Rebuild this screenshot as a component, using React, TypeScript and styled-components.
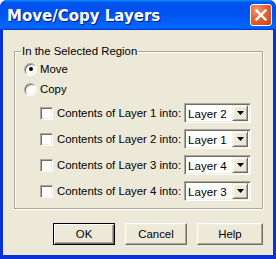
import styled, { createGlobalStyle } from 'styled-components';

const Global = createGlobalStyle`
  html, body { margin: 0; padding: 0; background: #fff; }
  * { box-sizing: border-box; }
`;

const rows = [
  { n: 1, into: 'Layer 2' },
  { n: 2, into: 'Layer 1' },
  { n: 3, into: 'Layer 4' },
  { n: 4, into: 'Layer 3' },
];

const App = () => {
  return (
    <>
      <Global />
      <Window>
        <TitleBar>
          <Title>Move/Copy Layers</Title>
          <CloseButton>
            <svg width="12" height="12" viewBox="0 0 12 12">
              <path d="M1.5 1.5 L10.5 10.5 M10.5 1.5 L1.5 10.5" stroke="#fff" strokeWidth="2.4" strokeLinecap="square" />
            </svg>
          </CloseButton>
        </TitleBar>

        <Client>
          <Group>
            <Legend>In the Selected Region</Legend>
            <OptionRow>
              <Radio checked />
              <span>Move</span>
            </OptionRow>
            <OptionRow $gap={4}>
              <Radio />
              <span>Copy</span>
            </OptionRow>
            {rows.map((r) => (
              <LayerRow key={r.n}>
                <CheckBox />
                <LayerLabel>Contents of Layer {r.n} into:</LayerLabel>
                <Combo>
                  <ComboText>{r.into}</ComboText>
                  <ComboButton>
                    <svg width="7" height="4" viewBox="0 0 7 4">
                      <path d="M0 0 H7 L3.5 4 Z" fill="#000" />
                    </svg>
                  </ComboButton>
                </Combo>
              </LayerRow>
            ))}
          </Group>

          <ButtonRow>
            <PushButton $default>OK</PushButton>
            <PushButton>Cancel</PushButton>
            <PushButton $wide>Help</PushButton>
          </ButtonRow>
        </Client>
      </Window>
    </>
  );
};

const Window = styled.div`
  width: 276px;
  height: 259px;
  display: flex;
  flex-direction: column;
  background: #0831d9;
  border-radius: 7px 7px 0 0;
  overflow: hidden;
  font-family: 'Liberation Sans', Arial, sans-serif;
  font-size: 11.4px;
  color: #000;
`;

const TitleBar = styled.div`
  height: 30px;
  flex: none;
  display: flex;
  align-items: center;
  padding: 0 4px 0 7px;
  background: linear-gradient(180deg, #0997ff, #0053ee 8%, #0050ee 40%, #0066ff 88%, #0066ff 93%, #005bff 95%, #003dd7 96%, #003dd7);
`;

const Title = styled.div`
  flex: 1;
  color: #fff;
  font-family: 'DejaVu Sans', sans-serif;
  font-weight: bold;
  font-size: 15px;
  text-shadow: 1px 1px 0 #0a1883;
  padding-top: 1px;
`;

const CloseButton = styled.div`
  width: 22px;
  height: 22px;
  display: flex;
  align-items: center;
  justify-content: center;
  border: 1px solid #fff;
  border-radius: 3px;
  background: radial-gradient(circle at 30% 25%, #f49a78 0, #e7643a 40%, #dc4f22 75%, #c8400f 100%);
`;

const Client = styled.div`
  flex: 1;
  margin: 0 3px 4px 3px;
  background: #ece9d8;
  display: flex;
  flex-direction: column;
  padding: 21px 10px 10px 11px;
`;

const Group = styled.div`
  position: relative;
  height: 158px;
  border: 1px solid #aca899;
  box-shadow: inset 1px 1px 0 #fff, 1px 1px 0 #fff;
  padding: 9px 0 0 0;
  display: flex;
  flex-direction: column;
`;

const Legend = styled.div`
  position: absolute;
  top: -8px;
  left: 6px;
  padding: 0 1px;
  background: #ece9d8;
  line-height: 14px;
`;

const OptionRow = styled.div<{ $gap?: number }>`
  display: flex;
  align-items: center;
  height: 16px;
  padding-left: 9px;
  gap: 3px;
  margin-top: ${({ $gap }) => ($gap ? `${$gap}px` : '0')};
`;

const Radio = styled.span<{ checked?: boolean }>`
  position: relative;
  width: 13px;
  height: 13px;
  border-radius: 50%;
  background: #fff;
  border: 1px solid;
  border-color: #aca899 #fff #fff #aca899;
  box-shadow: inset 1px 1px 0 #716f64, inset -1px -1px 0 #f1efe2;
  &::after {
    content: '';
    display: ${({ checked }) => (checked ? 'block' : 'none')};
    position: absolute;
    left: 3.5px;
    top: 3.5px;
    width: 4px;
    height: 4px;
    border-radius: 50%;
    background: #000;
  }
`;

const LayerRow = styled.div`
  display: flex;
  align-items: center;
  height: 20px;
  margin-top: 6px;
  padding-left: 25px;
`;

const CheckBox = styled.span`
  width: 13px;
  height: 13px;
  flex: none;
  background: #fff;
  border: 1px solid;
  border-color: #aca899 #fff #fff #aca899;
  box-shadow: inset 1px 1px 0 #716f64, inset -1px -1px 0 #f1efe2;
`;

const LayerLabel = styled.span`
  width: 131px;
  padding-left: 4px;
  white-space: nowrap;
`;

const Combo = styled.div`
  width: 67px;
  height: 20px;
  display: flex;
  align-items: center;
  background: #fff;
  border: 1px solid;
  border-color: #aca899 #fff #fff #aca899;
  box-shadow: inset 1px 1px 0 #716f64, inset -1px -1px 0 #f1efe2;
  padding: 2px 2px 2px 3px;
`;

const ComboText = styled.span`
  flex: 1;
  font-size: 11.6px;
`;

const ComboButton = styled.div`
  width: 16px;
  height: 16px;
  display: flex;
  align-items: center;
  justify-content: center;
  background: #ece9d8;
  border: 1px solid;
  border-color: #f1efe2 #716f64 #716f64 #f1efe2;
  box-shadow: inset 1px 1px 0 #fff, inset -1px -1px 0 #aca899;
`;

const ButtonRow = styled.div`
  display: flex;
  justify-content: flex-end;
  gap: 10px;
  margin-top: 14px;
`;

const PushButton = styled.div<{ $default?: boolean; $wide?: boolean }>`
  width: ${({ $wide }) => ($wide ? '66px' : '62px')};
  height: 22px;
  display: flex;
  align-items: center;
  justify-content: center;
  background: #ece9d8;
  border: 1px solid;
  border-color: ${({ $default }) => ($default ? '#000' : '#fff #716f64 #716f64 #fff')};
  box-shadow: ${({ $default }) =>
    $default
      ? 'inset 1px 1px 0 #fff, inset -1px -1px 0 #716f64, inset -2px -2px 0 #aca899'
      : 'inset -1px -1px 0 #aca899, inset 1px 1px 0 #f1efe2'};
`;

export default App;
